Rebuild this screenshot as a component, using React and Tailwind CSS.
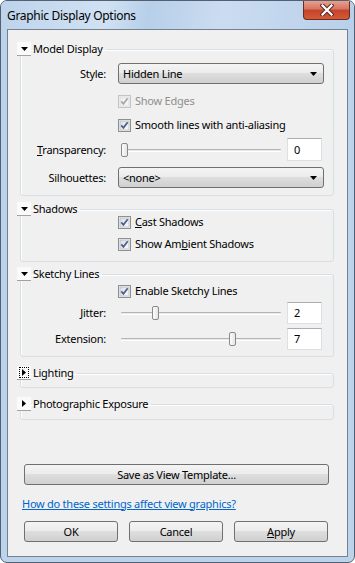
const btnGrad =
  "bg-[linear-gradient(to_bottom,#f4f4f4_0%,#ececec_45%,#dedede_50%,#d0d0d0_100%)]";

function DownTri() {
  return (
    <svg width="7" height="4" viewBox="0 0 7 4" className="shrink-0">
      <polygon points="0,0 7,0 3.5,4" fill="#000" />
    </svg>
  );
}

function RightTri() {
  return (
    <svg width="4" height="7" viewBox="0 0 4 7" className="shrink-0">
      <polygon points="0,0 4,3.5 0,7" fill="#000" />
    </svg>
  );
}

function Check({ disabled }) {
  const id = disabled ? "cbg-d" : "cbg";
  return (
    <svg width="13" height="13" viewBox="0 0 13 13" className="shrink-0">
      <defs>
        <linearGradient id={id} x1="0" y1="0" x2="1" y2="1">
          <stop offset="0" stopColor={disabled ? "#ececec" : "#d9dcdf"} />
          <stop offset="1" stopColor={disabled ? "#f8f8f8" : "#fbfbfb"} />
        </linearGradient>
      </defs>
      <rect x="0.5" y="0.5" width="12" height="12" fill="#f4f4f4" stroke={disabled ? "#c4c4c4" : "#8e8f8f"} />
      <rect x="2" y="2" width="9" height="9" fill={`url(#${id})`} stroke={disabled ? "#dadada" : "#b7bcc2"} strokeWidth="0.8" />
      <path
        d="M3.3 6.4 L5.4 8.8 L9.7 3.2"
        fill="none"
        stroke={disabled ? "#a8a8a8" : "#4a5f8f"}
        strokeWidth="1.7"
      />
    </svg>
  );
}

function Expander({ open, focus }) {
  return (
    <div className="w-[14px] h-[14px] bg-[#fafafa] border-b border-[#a2a2a2] flex items-center justify-center shrink-0">
      {focus ? (
        <div className="w-[10px] h-[11px] border border-dotted border-black flex items-center justify-center">
          <RightTri />
        </div>
      ) : open ? (
        <DownTri />
      ) : (
        <RightTri />
      )}
    </div>
  );
}

function Group({ title, open, focus, className, children }) {
  return (
    <fieldset
      className={`ml-[12px] w-[314px] border border-[#d5dfe5] rounded-[3px] shadow-[inset_1px_1px_0_#ffffff] ${className}`}
    >
      <legend className="-ml-[4px] pr-[3px] flex items-center gap-[2px] h-[14px]">
        <Expander open={open} focus={focus} />
        <span>{title}</span>
      </legend>
      {children}
    </fieldset>
  );
}

function Select({ value }) {
  return (
    <div
      className={`w-[206px] h-[21px] border border-[#707070] rounded-[3px] ${btnGrad} flex items-center justify-between pl-[4px] pr-[6px]`}
    >
      <span>{value}</span>
      <DownTri />
    </div>
  );
}

function Slider({ value }) {
  return (
    <div className="relative w-[166px] h-[16px] shrink-0">
      <div className="absolute left-[3px] right-[3px] top-[7px] h-[3px] bg-[#e7eaea] border-t border-[#b4b4b4] border-b border-b-[#ffffff] rounded-[1px]" />
      <div
        className="absolute top-[1px] w-[7px] h-[14px] rounded-[2px] border border-[#8a8a8a] bg-[linear-gradient(to_right,#fdfdfd,#e4e4e4)]"
        style={{ left: `${2.5 + value * 15.5}px` }}
      />
    </div>
  );
}

function NumBox({ value, tall }) {
  return (
    <div
      className={`ml-[3px] w-[35px] ${tall ? "h-[23px]" : "h-[22px]"} bg-white border border-[#dbdfe6] border-t-[#abadb3] flex items-center pl-[6px]`}
    >
      {value}
    </div>
  );
}

function CheckRow({ label, disabled, className }) {
  return (
    <div className={`flex items-center pl-[97px] ${className}`}>
      <Check disabled={disabled} />
      <span className={`ml-[4px] ${disabled ? "text-[#8f8f8f]" : ""}`}>{label}</span>
    </div>
  );
}

function Label({ children }) {
  return <div className="w-[85px] text-right shrink-0">{children}</div>;
}

function Button({ children, className }) {
  return (
    <div
      className={`h-[21px] border border-[#707070] rounded-[3px] ${btnGrad} flex items-center justify-center ${className}`}
    >
      {children}
    </div>
  );
}

export default function App() {
  return (
    <div className="w-[355px] h-[563px] font-['Noto_Sans',sans-serif] text-[11px] leading-[14px] tracking-[-0.25px] text-black">
      <div className="w-full h-full flex flex-col bg-[#bcd3ec] border border-[#526072] rounded-[7px] overflow-hidden">
        <div className="h-[28px] flex items-start shrink-0 bg-[linear-gradient(100deg,#bdd3eb_0%,#d0e1f3_30%,#b7cfe9_42%,#cadcf0_62%,#b8d0ea_100%)]">
          <div className="pl-[6px] pt-[8px] text-[12px] leading-[14px] tracking-[-0.3px]">
            Graphic Display Options
          </div>
          <div className="ml-auto mr-[4px] -mt-[1px] w-[47px] h-[20px] rounded-b-[4px] border border-t-0 border-[#6a2b22] bg-[linear-gradient(to_bottom,#e8a696_0%,#d77764_45%,#c5442c_55%,#d35b35_100%)] flex items-center justify-center">
            <svg width="14" height="12" viewBox="0 0 14 12">
              <path d="M2.5 1.5 L11.5 10.5 M11.5 1.5 L2.5 10.5" stroke="#5a2a22" strokeWidth="4.2" strokeLinecap="square" />
              <path d="M2.5 1.5 L11.5 10.5 M11.5 1.5 L2.5 10.5" stroke="#ffffff" strokeWidth="2.2" strokeLinecap="square" />
            </svg>
          </div>
        </div>

        <div className="flex-1 mx-[6px] mb-[5px] border border-[#77818d] bg-[#f0f0f0] flex flex-col">
          <Group title="Model Display" open className="mt-[12px] pb-[7px]">
            <div className="flex items-center h-[21px] mt-[7px]">
              <Label>Style:</Label>
              <div className="ml-[12px]">
                <Select value="Hidden Line" />
              </div>
            </div>
            <CheckRow label="Show Edges" disabled className="h-[22px] mt-[6px]" />
            <CheckRow label="Smooth lines with anti-aliasing" className="h-[26px]" />
            <div className="flex items-center h-[23px]">
              <Label>
                <u>T</u>ransparency:
              </Label>
              <div className="ml-[12px] flex items-center">
                <Slider value={0} />
                <NumBox value="0" tall />
              </div>
            </div>
            <div className="flex items-center h-[21px] mt-[6px]">
              <Label>Silhouettes:</Label>
              <div className="ml-[12px]">
                <Select value="<none>" />
              </div>
            </div>
          </Group>

          <Group title="Shadows" open className="mt-[6px] pb-[11px]">
            <CheckRow label={<><u>C</u>ast Shadows</>} className="h-[12px]" />
            <CheckRow label={<>Show Am<u>b</u>ient Shadows</>} className="h-[12px] mt-[10px]" />
          </Group>

          <Group title="Sketchy Lines" open className="mt-[5px] pb-[6px]">
            <CheckRow label="Enable Sketchy Lines" className="h-[18px] mt-[1px]" />
            <div className="flex items-center h-[22px] mt-[2px]">
              <Label>Jitter:</Label>
              <div className="ml-[12px] flex items-center">
                <Slider value={2} />
                <NumBox value="2" />
              </div>
            </div>
            <div className="flex items-center h-[22px] mt-[4px]">
              <Label>Extension:</Label>
              <div className="ml-[12px] flex items-center">
                <Slider value={7} />
                <NumBox value="7" />
              </div>
            </div>
          </Group>

          <Group title="Lighting" focus className="mt-[9px] pb-[7px]" />
          <Group title="Photographic Exposure" className="mt-[9px] pb-[8px]" />

          <div className="mt-auto pl-[16px]">
            <Button className="w-[305px]">Save as View Template...</Button>
          </div>
          <div className="mt-[11px] pl-[14px] h-[15px] flex items-center">
            <span className="text-[#0066cc] underline">How do these settings affect view graphics?</span>
          </div>
          <div className="mt-[10px] mb-[14px] pl-[16px] flex gap-[11px]">
            <Button className="w-[94px]">OK</Button>
            <Button className="w-[94px]">Cancel</Button>
            <Button className="w-[94px]">
              <span>
                <u>A</u>pply
              </span>
            </Button>
          </div>
        </div>
      </div>
    </div>
  );
}
